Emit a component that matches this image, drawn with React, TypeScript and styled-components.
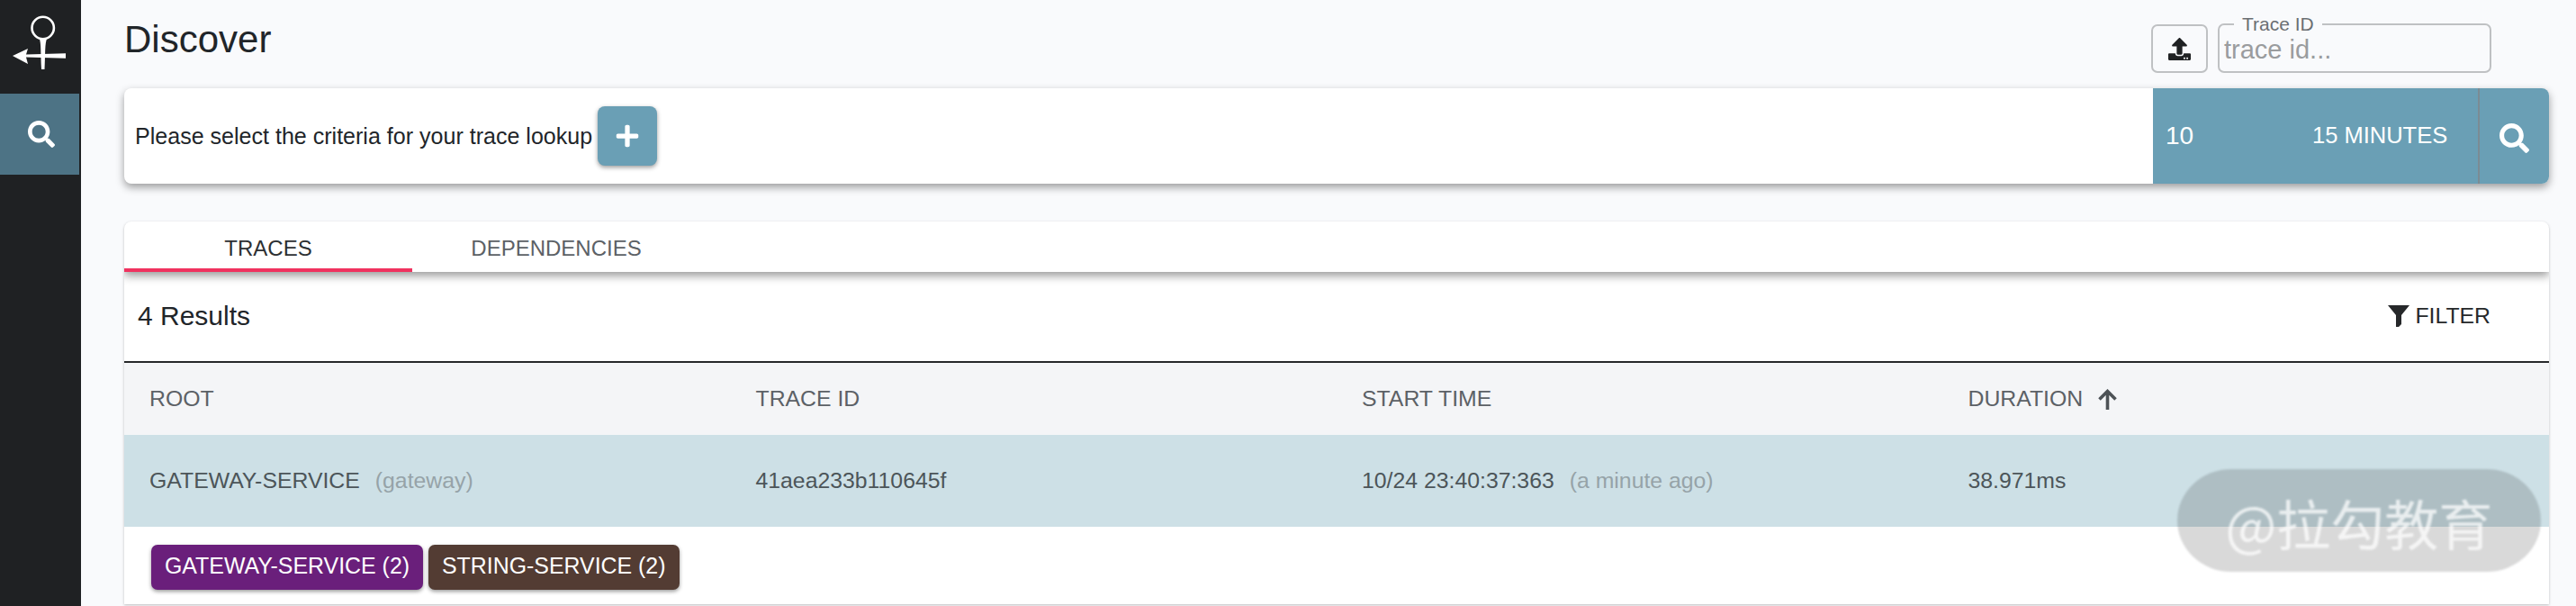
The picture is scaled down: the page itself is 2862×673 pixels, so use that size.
import React from "react";
import styled, { createGlobalStyle } from "styled-components";
import { FaSearch, FaPlus, FaUpload } from "react-icons/fa";

const Global = createGlobalStyle`
  html, body { margin: 0; padding: 0; background: #f9fafc; }
  body { font-family: "Liberation Sans", Arial, sans-serif; overflow: hidden; }
  * { box-sizing: border-box; }
`;

const Page = styled.div`
  display: flex;
  width: 2862px;
  height: 673px;
  overflow: hidden;
  position: relative;
  background: #f9fafc;
`;

const Sidebar = styled.nav`
  width: 90px;
  flex: none;
  background: #1f2123;
  padding-right: 2px;
`;

const LogoBox = styled.div`
  height: 104px;
  svg { display: block; }
`;

const NavItem = styled.div`
  height: 90px;
  background: #4d7385;
  color: #fff;
  display: flex;
  align-items: center;
  justify-content: center;
  font-size: 30px;
  padding-left: 4px;
`;

const Main = styled.main`
  flex: 1;
  min-width: 0;
  padding: 0 30px 0 48px;
`;

const Header = styled.header`
  height: 98px;
  display: flex;
  align-items: flex-start;
  justify-content: space-between;
  padding-right: 64px;
`;

const Title = styled.h1`
  margin: 21px 0 0 0;
  font-size: 42px;
  line-height: 46px;
  font-weight: 400;
  color: #212529;
`;

const HeaderTools = styled.div`
  display: flex;
  gap: 11px;
  padding-top: 27px;
`;

const UploadButton = styled.button`
  width: 63px;
  height: 54px;
  background: transparent;
  border: 2px solid #bfc1c3;
  border-radius: 7px;
  display: flex;
  align-items: center;
  justify-content: center;
  font-size: 25px;
  color: #1f2123;
  padding: 0;
`;

const TraceField = styled.fieldset`
  width: 304px;
  height: 64px;
  margin: -10px 0 0 0;
  padding: 0;
  border: 2px solid #bfc1c3;
  border-radius: 7px;
`;

const TraceLegend = styled.legend`
  margin-left: 16px;
  padding: 0 9px;
  font-size: 21px;
  line-height: 20px;
  color: #6b6f73;
`;

const TraceInput = styled.div`
  font-size: 29px;
  line-height: 36px;
  padding-left: 5px;
  color: #9a9c9e;
`;

const SearchBar = styled.section`
  height: 106px;
  display: flex;
  background: #fff;
  border-radius: 8px;
  box-shadow: 0 4px 10px rgba(0, 0, 0, 0.38);
  overflow: hidden;
`;

const Criteria = styled.div`
  flex: 1;
  display: flex;
  align-items: center;
  gap: 6px;
  padding-left: 12px;
  font-size: 25.05px;
  color: #212529;
`;

const AddButton = styled.button`
  width: 66px;
  height: 66px;
  background: #6a9fb5;
  border: 0;
  border-radius: 8px;
  color: #fff;
  font-size: 28px;
  display: flex;
  align-items: center;
  justify-content: center;
  padding: 0;
  box-shadow: 0 2px 5px rgba(0, 0, 0, 0.4);
`;

const Controls = styled.div`
  width: 440px;
  flex: none;
  display: flex;
  background: #6a9fb5;
  color: #fff;
`;

const Limit = styled.div`
  width: 146px;
  padding: 0 0 0 14px;
  font-size: 28px;
  display: flex;
  align-items: center;
`;

const Lookback = styled.div`
  width: 217px;
  font-size: 25.5px;
  display: flex;
  align-items: center;
  padding-left: 31px;
  padding-bottom: 2px;
  border-right: 2px solid #7b8b94;
`;

const SearchGo = styled.div`
  flex: 1;
  display: flex;
  align-items: center;
  justify-content: center;
  font-size: 33px;
  padding-top: 4px;
`;

const ResultsCard = styled.section`
  margin-top: 42px;
  height: 425px;
  background: #fff;
  border-radius: 8px 8px 0 0;
  box-shadow: 0 1px 3px rgba(0, 0, 0, 0.25);
  overflow: hidden;
`;

const Tabs = styled.div`
  height: 56px;
  display: flex;
  position: relative;
  box-shadow: 0 4px 10px rgba(0, 0, 0, 0.42);
`;

const Tab = styled.div<{ $active?: boolean }>`
  width: 320px;
  height: 56px;
  display: flex;
  align-items: center;
  justify-content: center;
  padding-top: 8px;
  font-size: 24px;
  color: ${(p) => (p.$active ? "#2d3033" : "#5c6166")};
  border-bottom: 4px solid ${(p) => (p.$active ? "#f0325f" : "transparent")};
`;

const ResultsHead = styled.div`
  height: 101px;
  display: flex;
  justify-content: space-between;
  align-items: flex-start;
  padding: 31px 65px 0 15px;
  border-bottom: 2px solid #26282a;
`;

const ResultCount = styled.div`
  font-size: 30px;
  line-height: 36px;
  color: #212529;
`;

const FilterButton = styled.div`
  display: flex;
  align-items: center;
  gap: 6px;
  font-size: 24.8px;
  line-height: 36px;
  color: #26282a;
  svg { display: block; }
`;

const Row = styled.div<{ $head?: boolean }>`
  display: grid;
  grid-template-columns: repeat(4, 1fr);
  align-items: center;
  height: ${(p) => (p.$head ? "80px" : "102px")};
  background: ${(p) => (p.$head ? "#f4f5f7" : "#cde0e6")};
  color: ${(p) => (p.$head ? "#5c6166" : "#4c5559")};
  font-size: 24.8px;
`;

const Cell = styled.div`
  padding-left: 28px;
  display: flex;
  align-items: center;
  gap: 17px;
`;

const Muted = styled.span`
  color: #96a3a8;
`;

const Badges = styled.div`
  display: flex;
  gap: 6px;
  padding: 20px 0 0 30px;
`;

const Badge = styled.div<{ $color: string }>`
  height: 50px;
  padding: 0 15px 3px;
  border-radius: 7px;
  background: ${(p) => p.$color};
  color: #fff;
  font-size: 24.9px;
  display: flex;
  align-items: center;
  box-shadow: 0 2px 4px rgba(0, 0, 0, 0.4);
`;

const Watermark = styled.div`
  position: absolute;
  left: 2419px;
  top: 521px;
  width: 404px;
  height: 114px;
  border-radius: 60px / 57px;
  background: rgba(0, 0, 0, 0.15);
  display: flex;
  align-items: center;
  justify-content: center;
  padding-top: 2px;
  color: rgba(255, 255, 255, 0.72);
  font-family: "Noto Sans CJK SC", "Liberation Sans", sans-serif;
  font-size: 60px;
  filter: blur(0.9px);
`;

const Logo = () => (
  <svg width="88" height="104" viewBox="0 0 88 104" fill="none">
    <circle cx="47.7" cy="31" r="12.2" stroke="#fff" strokeWidth="2.6" />
    <path d="M43.5 42 C46 48 45 60 46 77 L49.5 77 C50.5 60 49.5 48 52.5 42 Z" fill="#fff" />
    <path d="M14 62 L31 54 L29 60.6 L73 59.3 L73 64.7 L29 63.4 L31 71 Z" fill="#fff" />
  </svg>
);

const FunnelIcon = () => (
  <svg width="24" height="26" viewBox="0 0 24 26">
    <path d="M0 1 H24 L15 12 V22 L12 25 H9 V12 Z" fill="#26282a" />
  </svg>
);

const SortArrow = () => (
  <svg width="21" height="23" viewBox="0 0 21 23" fill="none" stroke="#4d5256" strokeWidth="3.6">
    <path d="M10.5 23 V3 M1.5 11.5 L10.5 2.5 L19.5 11.5" />
  </svg>
);

export default function App() {
  return (
    <Page>
      <Global />
      <Sidebar>
        <LogoBox><Logo /></LogoBox>
        <NavItem><FaSearch /></NavItem>
      </Sidebar>
      <Main>
        <Header>
          <Title>Discover</Title>
          <HeaderTools>
            <UploadButton><FaUpload /></UploadButton>
            <TraceField>
              <TraceLegend>Trace ID</TraceLegend>
              <TraceInput>trace id...</TraceInput>
            </TraceField>
          </HeaderTools>
        </Header>
        <SearchBar>
          <Criteria>
            Please select the criteria for your trace lookup
            <AddButton><FaPlus /></AddButton>
          </Criteria>
          <Controls>
            <Limit>10</Limit>
            <Lookback>15 MINUTES</Lookback>
            <SearchGo><FaSearch /></SearchGo>
          </Controls>
        </SearchBar>
        <ResultsCard>
          <Tabs>
            <Tab $active>TRACES</Tab>
            <Tab>DEPENDENCIES</Tab>
          </Tabs>
          <ResultsHead>
            <ResultCount>4 Results</ResultCount>
            <FilterButton><FunnelIcon />FILTER</FilterButton>
          </ResultsHead>
          <Row $head>
            <Cell>ROOT</Cell>
            <Cell>TRACE ID</Cell>
            <Cell>START TIME</Cell>
            <Cell>DURATION <SortArrow /></Cell>
          </Row>
          <Row>
            <Cell>GATEWAY-SERVICE <Muted>(gateway)</Muted></Cell>
            <Cell>41aea233b110645f</Cell>
            <Cell>10/24 23:40:37:363 <Muted>(a minute ago)</Muted></Cell>
            <Cell>38.971ms</Cell>
          </Row>
          <Badges>
            <Badge $color="#6a1f7b">GATEWAY-SERVICE (2)</Badge>
            <Badge $color="#533c33">STRING-SERVICE (2)</Badge>
          </Badges>
        </ResultsCard>
      </Main>
      <Watermark>@拉勾教育</Watermark>
    </Page>
  );
}
